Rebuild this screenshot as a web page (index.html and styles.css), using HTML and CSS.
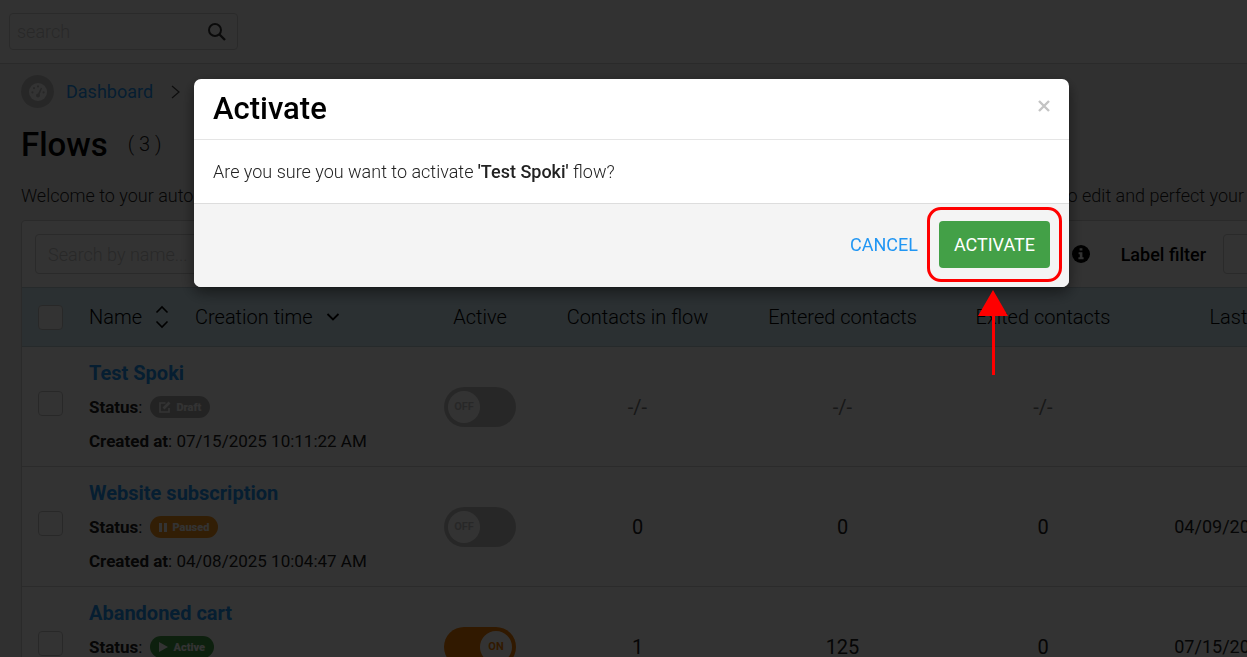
FILE: index.html
```
<!DOCTYPE html>
<html lang="en">
<head>
  <meta charset="UTF-8">
  <title>Flows</title>
  <meta name="viewport" content="width=device-width, initial-scale=1.0">
  <link rel="stylesheet" href="styles.css">
</head>
<body>

<header class="topbar">
  <form class="search">
    <input type="text" placeholder="search" aria-label="search">
    <button type="button" aria-label="Search">
      <svg width="20" height="20" viewBox="0 0 20 20" fill="none" stroke="currentColor">
        <circle cx="8" cy="8" r="6" stroke-width="2"/>
        <path d="M12.5 12.5L18 18" stroke-width="2.4"/>
      </svg>
    </button>
  </form>
</header>

<main class="page">
  <nav class="breadcrumb">
    <span class="breadcrumb-icon">
      <svg width="18" height="18" viewBox="0 0 18 18">
        <circle cx="9" cy="9" r="9" fill="#ffffff"/>
        <g fill="#c4c4c4">
          <circle cx="3.4" cy="9.4" r="1.1"/>
          <circle cx="5" cy="5.2" r="1.1"/>
          <circle cx="9" cy="3.4" r="1.1"/>
          <circle cx="14.6" cy="9.4" r="1.1"/>
          <circle cx="9" cy="12.4" r="2"/>
          <path d="M8.3 12l3.6-7.4 1.2.6-3 7.6z"/>
        </g>
      </svg>
    </span>
    <a href="#">Dashboard</a>
    <svg width="9" height="14" viewBox="0 0 9 14" fill="none" stroke="#444" stroke-width="1.3"><path d="M1 1l7 6-7 6"/></svg>
  </nav>

  <div class="title">
    <h1>Flows</h1>
    <span class="count">( 3 )</span>
  </div>

  <p class="intro">
    <span>Welcome to your automations</span>
    <span>to edit and perfect your</span>
  </p>

  <section class="card">
    <div class="toolbar">
      <input type="text" class="field" placeholder="Search by name..." aria-label="Search by name">
      <div class="toolbar-right">
        <svg width="18" height="18" viewBox="0 0 18 18">
          <circle cx="9" cy="9" r="9" fill="#000"/>
          <path d="M7.6 3.2h2.8v2.4H7.6zM6.6 7.2h3.8v5h1.2v2H6.4v-2h1.4v-3H6.6z" fill="#fff"/>
        </svg>
        <label for="label-filter">Label filter</label>
        <select class="field" id="label-filter"><option></option></select>
      </div>
    </div>

    <table class="flows">
      <colgroup>
        <col class="col-check">
        <col class="col-name">
        <col class="col-active">
        <col class="col-contacts">
        <col class="col-entered">
        <col class="col-exited">
        <col class="col-last">
      </colgroup>
      <thead>
        <tr>
          <th><input type="checkbox" aria-label="Select all"></th>
          <th>
            <div class="sorts">
              <span>Name</span>
              <svg width="14" height="24" viewBox="0 0 14 24" fill="none" stroke="currentColor" stroke-width="1.6"><path d="M1.5 7.5L7 2l5.5 5.5M1.5 16.5L7 22l5.5-5.5"/></svg>
              <span class="sort-time">Creation time</span>
              <svg width="14" height="10" viewBox="0 0 14 10" fill="none" stroke="currentColor" stroke-width="1.8"><path d="M1.5 2L7 7.5 12.5 2"/></svg>
            </div>
          </th>
          <th>Active</th>
          <th>Contacts in flow</th>
          <th>Entered contacts</th>
          <th>Exited contacts</th>
          <th>Last triggered</th>
        </tr>
      </thead>
      <tbody>
        <tr>
          <td><input type="checkbox" aria-label="Select Test Spoki"></td>
          <td>
            <a class="flow-name" href="#">Test Spoki</a>
            <div class="line"><span><b>Status</b>:</span>
              <span class="badge draft">
                <svg width="12" height="12" viewBox="0 0 12 12" fill="none" stroke="currentColor" stroke-width="1.6"><path d="M6.5 2H1v9h9V7"/><path d="M4.5 7.5L10.5 1.5" stroke-width="2.6"/></svg>
                Draft
              </span>
            </div>
            <div class="line"><span><b>Created at</b>: 07/15/2025 10:11:22 AM</span></div>
          </td>
          <td><label class="switch"><input type="checkbox" aria-label="Test Spoki active"><span>OFF</span></label></td>
          <td class="empty">-/-</td>
          <td class="empty">-/-</td>
          <td class="empty">-/-</td>
          <td></td>
        </tr>
        <tr>
          <td><input type="checkbox" aria-label="Select Website subscription"></td>
          <td>
            <a class="flow-name" href="#">Website subscription</a>
            <div class="line"><span><b>Status</b>:</span>
              <span class="badge paused">
                <svg width="8" height="9" viewBox="0 0 8 9" fill="currentColor"><path d="M0 0h3v9H0zM5 0h3v9H5z"/></svg>
                Paused
              </span>
            </div>
            <div class="line"><span><b>Created at</b>: 04/08/2025 10:04:47 AM</span></div>
          </td>
          <td><label class="switch"><input type="checkbox" aria-label="Website subscription active"><span>OFF</span></label></td>
          <td>0</td>
          <td>0</td>
          <td>0</td>
          <td class="date">04/09/2025 9:30:12 AM</td>
        </tr>
        <tr>
          <td><input type="checkbox" aria-label="Select Abandoned cart"></td>
          <td>
            <a class="flow-name" href="#">Abandoned cart</a>
            <div class="line"><span><b>Status</b>:</span>
              <span class="badge active">
                <svg width="9" height="10" viewBox="0 0 9 10" fill="currentColor"><path d="M0 0l9 5-9 5z"/></svg>
                Active
              </span>
            </div>
            <div class="line"><span><b>Created at</b>: 04/08/2025 10:02:15 AM</span></div>
          </td>
          <td><label class="switch on"><input type="checkbox" checked aria-label="Abandoned cart active"><span>ON</span></label></td>
          <td>1</td>
          <td>125</td>
          <td>0</td>
          <td class="date">07/15/2025 9:08:40 AM</td>
        </tr>
      </tbody>
    </table>
  </section>
</main>

<div class="overlay">
  <div class="modal" role="dialog" aria-labelledby="modal-title">
    <div class="modal-header">
      <h2 id="modal-title">Activate</h2>
      <button type="button" class="close" aria-label="Close">
        <svg width="12" height="12" viewBox="0 0 12 12" fill="none" stroke="currentColor" stroke-width="2.4"><path d="M1 1l10 10M11 1L1 11"/></svg>
      </button>
    </div>
    <div class="modal-body">Are you sure you want to activate <b>'Test Spoki'</b> flow?</div>
    <div class="modal-footer">
      <button type="button" class="cancel">CANCEL</button>
      <div class="highlight">
        <button type="button" class="activate">ACTIVATE</button>
        <svg class="arrow" width="30" height="85" viewBox="0 0 30 85" fill="#ff0000"><path d="M15 0l15 26H17v59h-3V26H0z"/></svg>
      </div>
    </div>
  </div>
</div>

</body>
</html>
```
FILE: styles.css
```
* {
  box-sizing: border-box;
}

body {
  margin: 0;
  height: 100vh;
  overflow: hidden;
  font-family: Roboto, "Liberation Sans", sans-serif;
  font-size: 18px;
  background: #f1f1f1;
  color: #222;
}

a {
  color: #2196f3;
  text-decoration: none;
}

button {
  border: none;
  background: none;
  padding: 0;
  font: inherit;
  cursor: pointer;
}

svg {
  display: block;
  flex: none;
}

.topbar {
  height: 64px;
  padding: 13px 9px;
  background: #fafafa;
  border-bottom: 1px solid #d0d0d0;
}

.search {
  display: flex;
  align-items: center;
  width: 229px;
  height: 37px;
  padding: 0 10px 0 7px;
  border: 1px solid #d0d0d0;
  border-radius: 4px;
}

.search input {
  flex: 1;
  min-width: 0;
  padding: 0;
  border: none;
  background: none;
  font: inherit;
  font-weight: 300;
}

.search button {
  color: #333;
}

::placeholder {
  color: #c8c8c8;
  opacity: 1;
}

.page {
  padding: 11px 0 0 21px;
}

.breadcrumb {
  display: flex;
  align-items: center;
  height: 33px;
}

.breadcrumb-icon {
  display: flex;
  align-items: center;
  justify-content: center;
  width: 33px;
  height: 33px;
  margin-right: 12px;
  border-radius: 50%;
  background: #c4c4c4;
}

.breadcrumb a {
  margin-right: 18px;
}

.title {
  display: flex;
  align-items: center;
  gap: 20px;
  height: 72px;
}

.title h1 {
  margin: 0;
  font-size: 33px;
  font-weight: 500;
  color: #000;
}

.count {
  font-size: 20px;
  font-weight: 300;
}

.intro {
  display: flex;
  justify-content: space-between;
  margin: 0;
  padding-right: 3px;
  height: 40px;
  line-height: 32px;
  font-weight: 300;
  white-space: nowrap;
}

.card {
  width: max-content;
  min-width: 100%;
  border: 1px solid #d0d0d0;
  border-radius: 4px;
  background: #fff;
}

.toolbar,
.toolbar-right {
  display: flex;
  align-items: center;
}

.toolbar {
  justify-content: space-between;
  height: 66px;
  padding: 0 13px;
}

.toolbar label {
  margin: 0 17px 0 31px;
  font-weight: 500;
  color: #000;
}

.field {
  height: 40px;
  padding: 0 12px;
  border: 1px solid #d0d0d0;
  border-radius: 4px;
  background: #fff;
  font: inherit;
  font-weight: 300;
}

input.field {
  width: 280px;
}

select.field {
  width: 158px;
}

.flows {
  table-layout: fixed;
  width: 1372px;
  border-collapse: collapse;
}

.col-check {
  width: 58px;
}

.col-name {
  width: 350px;
}

.col-active {
  width: 100px;
}

.col-contacts {
  width: 215px;
}

.col-entered {
  width: 195px;
}

.col-exited {
  width: 206px;
}

.flows th {
  height: 59px;
  padding: 0;
  border-top: 1px solid #bcd0d8;
  border-bottom: 1px solid #bcd0d8;
  background: #d4edf7;
  font-size: 20px;
  font-weight: 300;
  text-align: center;
  color: #000;
}

.flows td {
  height: 120px;
  padding: 9px 0;
  border-bottom: 1px solid #d8d8d8;
  font-size: 20px;
  text-align: center;
}

.flows td:nth-child(2) {
  padding: 9px 9px 8px;
  font-size: 17px;
  text-align: left;
}

.flows td.empty {
  color: #777;
}

.flows td.date {
  font-size: 18px;
}

.flows > * > tr > :first-child input {
  appearance: none;
  display: block;
  width: 25px;
  height: 25px;
  margin: 0 16px;
  border: 1px solid #c8c8c8;
  border-radius: 4px;
  background: #fff;
}

.flows td:first-child {
  padding-bottom: 16px;
}

.sorts {
  display: flex;
  align-items: center;
  padding-left: 9px;
  gap: 13px;
}

.sort-time {
  margin-left: 13px;
}

.flow-name {
  display: block;
  font-size: 20px;
  font-weight: 700;
  line-height: 34px;
}

.line {
  display: flex;
  align-items: center;
  gap: 8px;
  height: 34px;
}

.badge {
  display: flex;
  align-items: center;
  gap: 5px;
  height: 22px;
  padding: 0 9px;
  border-radius: 11px;
  font-size: 11px;
  font-weight: 900;
  color: #fff;
}

.badge.draft {
  background: #b0b0b0;
}

.badge.paused {
  background: #f7941d;
}

.badge.active {
  background: #43a047;
}

.switch {
  display: flex;
  width: 72px;
  height: 40px;
  margin: 0 auto;
  padding: 4px;
  border-radius: 20px;
  background: #c4c4c4;
}

.switch input {
  appearance: none;
  margin: 0;
}

.switch span {
  display: flex;
  align-items: center;
  justify-content: center;
  width: 32px;
  height: 32px;
  border-radius: 50%;
  background: #fff;
  font-size: 11px;
  font-weight: 700;
  color: #c4c4c4;
}

.switch.on {
  justify-content: flex-end;
  background: #f57c00;
}

.switch.on span {
  color: #f57c00;
}

.overlay {
  position: fixed;
  inset: 0;
  display: flex;
  align-items: flex-start;
  justify-content: center;
  padding: 79px 0 0 16px;
  background: rgba(0, 0, 0, 0.8);
}

.modal {
  width: 80%;
  max-width: 875px;
  border-radius: 7px;
  background: #fff;
  box-shadow: 0 5px 15px rgba(0, 0, 0, 0.5);
}

.modal-header {
  display: flex;
  justify-content: space-between;
  height: 61px;
  padding: 0 19px;
  border-bottom: 1px solid #e5e5e5;
}

.modal-header h2 {
  margin: 0;
  font-size: 31px;
  font-weight: 500;
  line-height: 60px;
  color: #000;
}

.close {
  height: 54px;
  color: #c4c4c4;
}

.modal-body {
  padding: 0 19px;
  line-height: 63px;
  font-weight: 300;
}

.modal-body b {
  font-weight: 500;
}

.modal-footer {
  display: flex;
  align-items: center;
  justify-content: flex-end;
  gap: 21px;
  padding: 17px 19px 19px;
  border-top: 1px solid #ddd;
  border-radius: 0 0 7px 7px;
  background: #f4f4f4;
}

.cancel {
  color: #2196f3;
}

.highlight {
  position: relative;
}

/* red frame around the confirm button */
.highlight::after {
  content: "";
  position: absolute;
  inset: -14px -12px;
  border: 3px solid #ff0000;
  border-radius: 14px;
  pointer-events: none;
}

.activate {
  display: block;
  height: 47px;
  padding: 0 15px;
  border-radius: 4px;
  background: #43a047;
  color: #fff;
}

.arrow {
  position: absolute;
  top: 69px;
  left: 39px;
}
```
